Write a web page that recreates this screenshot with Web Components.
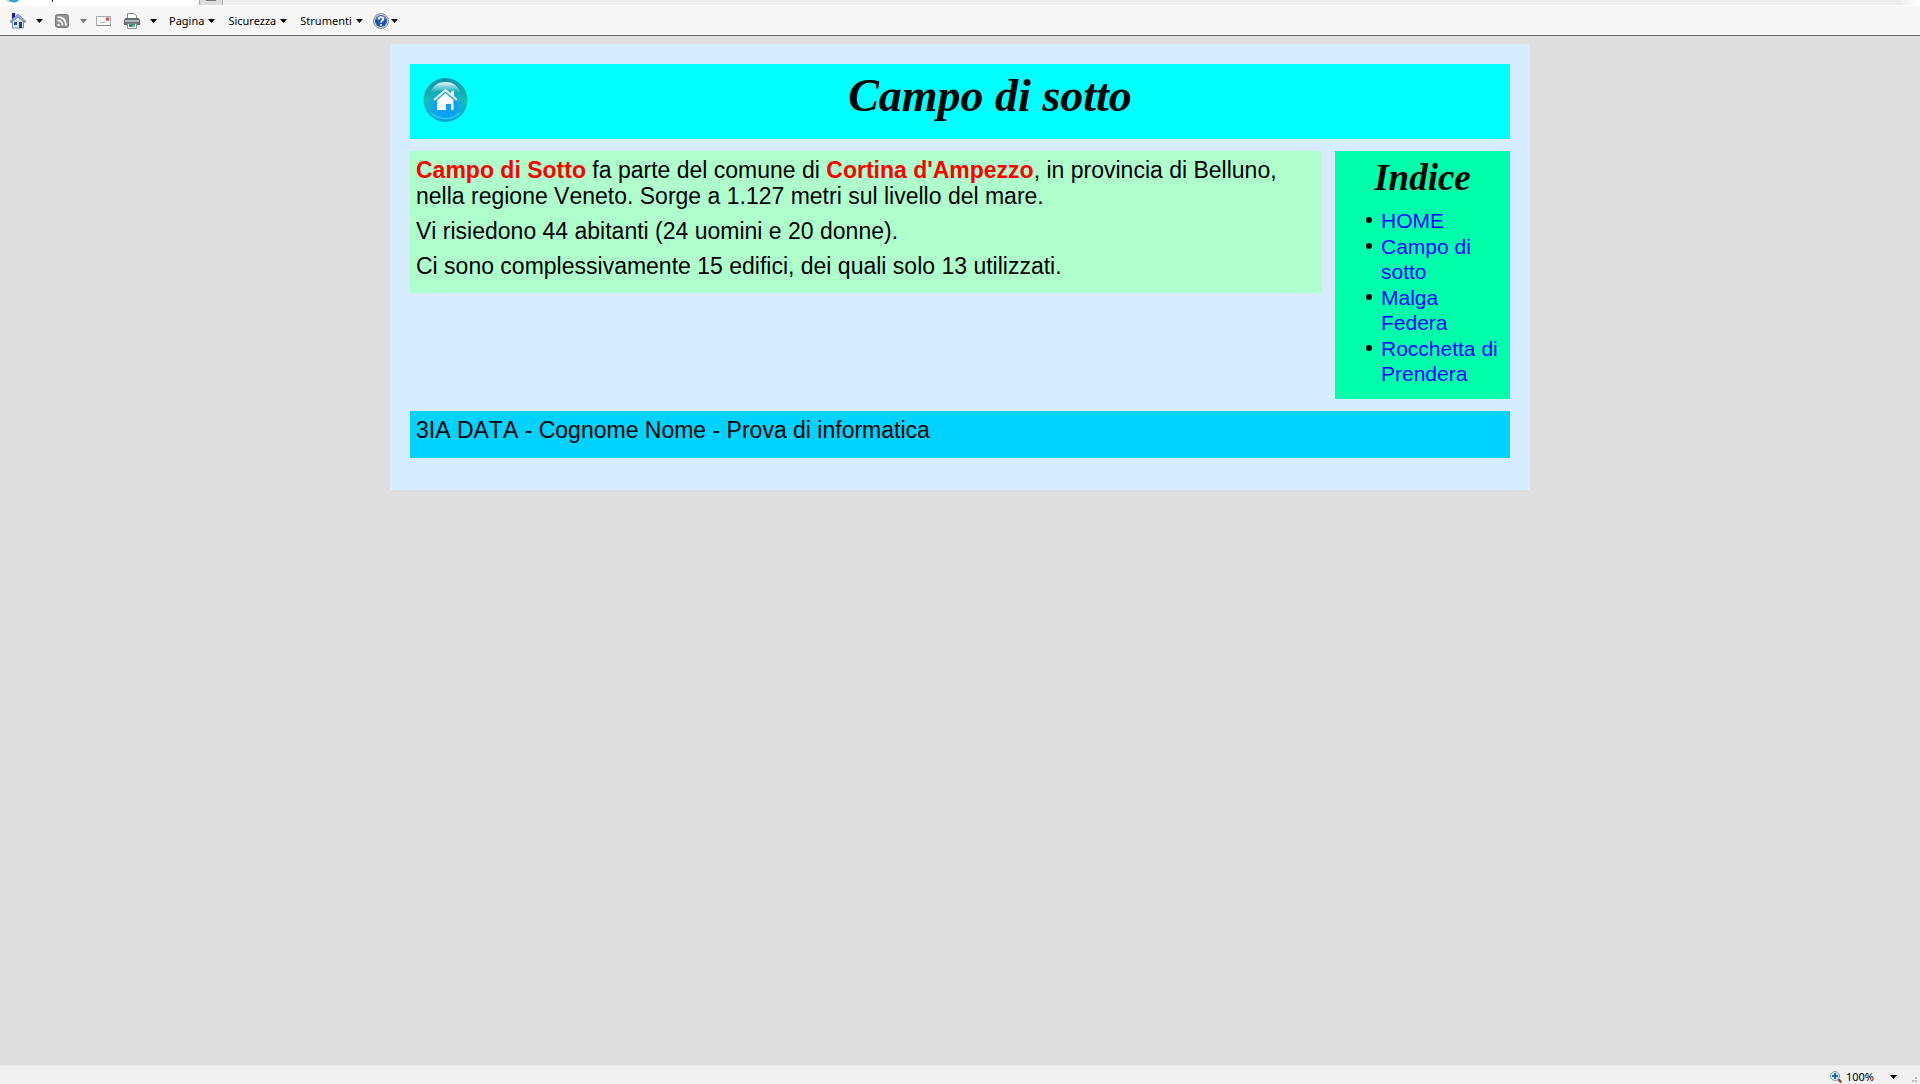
<!DOCTYPE html>
<html lang="it">
<head>
<meta charset="utf-8">
<title>Campo di sotto</title>
<style>
html, body { margin: 0; }
body { background: #dedede; font-family: "Liberation Sans", Arial, sans-serif; font-kerning: none; color: #000; }
</style>
</head>
<body>
<village-app></village-app>
<script>
const define = (name, html) => customElements.define(name, class extends HTMLElement {
  constructor() {
    super();
    this.attachShadow({ mode: 'open' }).innerHTML = html;
  }
});

define('drop-arrow', `
<style>
:host { display: block; width: 7px; height: 4px; }
svg { display: block; }
</style>
<svg width="7" height="4" viewBox="0 0 7 4"><path d="M0 0h7L3.5 4z" fill="currentColor"/></svg>`);

define('tab-strip', `
<style>
:host { display: flex; height: 5px; background: #eee; border-bottom: 1px solid #fff; }
.tab { width: 199px; background: #fff; }
.new { width: 22px; border: solid #aaa; border-width: 0 1px; background: #dcdcdc; display: flex; justify-content: center; }
.new i { width: 10px; height: 1px; background: #777; }
.end { margin-left: auto; width: 20px; background: linear-gradient(90deg, #eee, #fff); }
svg { display: block; }
</style>
<div class="tab"><svg width="60" height="4" viewBox="0 0 60 4"><path d="M8 0h11q-2 2.500-5 2.500T8 0z" fill="#2ba6dd"/><path d="M7 0q0 2 3 1.500" fill="none" stroke="#e0b93c"/><path d="M52 0h1v2h-1z" fill="#222"/></svg></div>
<div class="new"><i></i></div>
<div class="end"></div>`);

define('tool-bar', `
<style>
:host { display: flex; align-items: center; height: 29px; padding-left: 10px; background: #f7f7f7; border-bottom: 1px solid #6b6b6b;
  font: 11px/16px "Noto Sans", sans-serif; }
button { display: flex; align-items: center; gap: 4px; margin: 0 13px 0 0; padding: 0; border: 0; background: none; font: inherit; color: #000; }
.split { gap: 10px; margin-right: 12px; }
.split.off { color: #777; margin-right: 9px; }
.last { margin-right: 10px; }
.help { gap: 2px; }
svg { display: block; }
</style>
<button class="split" aria-label="Pagina iniziale"><svg width="16" height="16" viewBox="0 0 16 16"><path d="M2.500 8v7h11V8L8 2z" fill="#dde6ee" stroke="#7d8da0"/><path d="M2 0h3v4L2 6z" fill="#1717c8"/><path d="M0 8.500L8 1l8 7.500-1.500 1L8 4 1.500 9.500z" fill="#8fa9cb" stroke="#56749f" stroke-width=".7"/><path d="M4 9h3v3H4z" fill="#174eac"/><path d="M9 9h3v6H9z" fill="#253f73"/><path d="M3 14h5v2H3z" fill="#b2bfcc"/></svg><drop-arrow></drop-arrow></button>
<button class="split off" aria-label="Feed"><svg width="15" height="16" viewBox="1 0 15 16"><rect x="1.500" y="1.500" width="13" height="13" rx="2" fill="#929292" stroke="#777"/><circle cx="4.500" cy="12" r="1.300" fill="#fff"/><path d="M3.500 7.500q5 0 5 5M3.500 4q8.500 0 8.500 8.500" fill="none" stroke="#fff" stroke-width="1.700"/></svg><drop-arrow></drop-arrow></button>
<button aria-label="Leggi posta"><svg width="15" height="16" viewBox="0 0 15 16"><rect x=".5" y="3.500" width="14" height="9" fill="#fafafa" stroke="#aaa"/><path d="M1 12.500h14" stroke="#888"/><path d="M10 4.500h3v3h-3z" fill="#e34235"/><path d="M4 9.500h5" stroke="#bbb"/></svg></button>
<button class="split" aria-label="Stampa"><svg width="16" height="16" viewBox="0 0 16 16"><path d="M3.500 6V.5h7L12.500 3v3" fill="#fff" stroke="#888"/><path d="M1 5h14l1 2v5H0V7z" fill="#666e75"/><path d="M1 7h14v2H1z" fill="#adb6bc"/><path d="M3.500 10.500h9v5h-9z" fill="#fff" stroke="#888"/><path d="M5 11h6v3H5z" fill="#1b8d9d"/><path d="M8 12h3v2H8z" fill="#68c66a"/></svg><drop-arrow></drop-arrow></button>
<button>Pagina<drop-arrow></drop-arrow></button>
<button>Sicurezza<drop-arrow></drop-arrow></button>
<button class="last">Strumenti<drop-arrow></drop-arrow></button>
<button class="help" aria-label="Guida"><svg width="16" height="16" viewBox="0 0 16 16"><circle cx="8" cy="8" r="7.500" fill="#d5d9df" stroke="#858b95"/><circle cx="8" cy="8" r="6" fill="#2054b5"/><path d="M3 6a5.200 5.200 0 0 1 10 0q-5 2-10 0z" fill="#5482d4"/><path d="M5.700 6.300Q5.800 4 8 4t2.300 2q0 1.200-1.200 1.900T8 9.700" fill="none" stroke="#fff" stroke-width="1.600"/><circle cx="8" cy="12" r="1" fill="#fff"/></svg><drop-arrow></drop-arrow></button>`);

define('status-bar', `
<style>
:host { display: flex; align-items: center; justify-content: flex-end; height: 18px; background: #f0f0f0; border-top: 1px solid #e6e6e6;
  font: 11px/16px "Noto Sans", sans-serif; }
button { display: flex; align-items: center; gap: 4px; margin: 0; padding: 4px 0 0; border: 0; background: none; font: inherit; color: #000; }
drop-arrow { margin-left: 12px; }
.grip { margin-left: 15px; align-self: flex-end; }
svg { display: block; }
</style>
<button><svg width="12" height="12" viewBox="0 0 12 12"><path d="M8 8l3.500 3.500" stroke="#8b5636" stroke-width="2.500"/><circle cx="5" cy="5" r="4.500" fill="#d9ecfa" stroke="#8799aa"/><path d="M5 2v6M2 5h6" stroke="#1767c3" stroke-width="2"/></svg>100%<drop-arrow></drop-arrow></button>
<svg class="grip" width="8" height="9" viewBox="0 0 8 9"><path d="M0 5h2v2H0zM3 5h2v2H3zM3 2h2v2H3z" fill="#bbb"/></svg>`);

define('page-banner', `
<style>
:host { display: flex; height: 75px; background: #0ff; }
a { margin: 14px 0 0 13px; width: 47px; }
h1 { flex: 1; margin: 5px 0 0; text-align: center; font: italic bold 46px/54px "Liberation Serif", "Times New Roman", serif; }
svg { display: block; }
</style>
<a href="#home" aria-label="Home"><svg width="46" height="46" viewBox="0 0 46 46">
<defs><linearGradient id="rim" x1="0" y1="0" x2="0" y2="1"><stop offset="0" stop-color="#0b91aa"/><stop offset=".5" stop-color="#18bdb4"/><stop offset="1" stop-color="#0aa5dc"/></linearGradient>
<radialGradient id="ball" cx=".5" cy=".68" r=".5"><stop offset="0" stop-color="#0798fa"/><stop offset=".6" stop-color="#08a5ef"/><stop offset="1" stop-color="#11b5c8" stop-opacity="0"/></radialGradient>
<linearGradient id="shine" x1="0" y1="0" x2="0" y2="1"><stop offset="0" stop-color="#fff"/><stop offset="1" stop-color="#6be0f4" stop-opacity=".1"/></linearGradient></defs>
<circle cx="22.500" cy="22" r="22" fill="url(#rim)"/><circle cx="22.500" cy="22" r="20" fill="url(#ball)"/>
<path d="M7 15C10 7 16 4 22.500 4S35 7 38 15q-15-6-31 0z" fill="url(#shine)"/>
<path d="M8 35q14.500 11 29 0" fill="none" stroke="#2fc8fb" stroke-width="1.500"/>
<path d="M11 22L22.500 12 34 22" fill="none" stroke="#fff" stroke-width="2"/><path d="M28 13h3v6l-3-3z" fill="#fff"/>
<path d="M14 22.500l8.500-7.500 8 7V32H28v-6h-5v6h-9z" fill="#fff"/></svg></a>
<h1><slot></slot></h1>`);

define('page-article', `
<style>
:host { display: flex; flex-direction: column; gap: 9px; box-sizing: border-box; flex: 1; padding: 6px 6px 14px; background: #aeffcb; font-size: 23px; line-height: 26px; }
::slotted(p) { margin: 0; }
</style>
<slot></slot>`);

define('page-index', `
<style>
:host { display: block; box-sizing: border-box; width: 175px; padding: 6px 6px 13px; background: #00ffaa; }
h2 { margin: 0 0 9px; text-align: center; font: italic bold 37px/42px "Liberation Serif", "Times New Roman", serif; }
ul { display: flex; flex-direction: column; gap: 1px; margin: 0; padding: 0 0 0 25px; list-style: none; font-size: 21px; line-height: 25px; }
li { display: flex; gap: 9px; }
li::before { content: ""; flex: none; width: 6px; height: 6px; margin-top: 9px; border-radius: 50%; background: #000; }
a { color: #00f; text-decoration: none; }
</style>
<h2>Indice</h2>
<ul>
<li><a href="#home">HOME</a></li>
<li><a href="#campo">Campo di sotto</a></li>
<li><a href="#malga">Malga Federa</a></li>
<li><a href="#rocchetta">Rocchetta di Prendera</a></li>
</ul>`);

define('page-footer', `
<style>
:host { display: block; padding: 6px 6px 15px; background: #00d2ff; font-size: 23px; line-height: 26px; }
</style>
<slot></slot>`);

define('village-app', `
<style>
:host { display: flex; flex-direction: column; min-height: 100vh; }
main { flex: 1; }
.sheet { display: flex; flex-direction: column; gap: 12px; box-sizing: border-box; max-width: 1140px; margin: 8px auto 0; padding: 20px 20px 32px; background: #d6edff; }
.row { display: flex; align-items: flex-start; gap: 13px; }
strong { color: #f00; }
p { margin: 0; }
</style>
<tab-strip></tab-strip>
<tool-bar></tool-bar>
<main><div class="sheet">
<page-banner>Campo di sotto</page-banner>
<div class="row">
<page-article>
<p><strong>Campo di Sotto</strong> fa parte del comune di <strong>Cortina d'Ampezzo</strong>, in provincia di Belluno, nella regione Veneto. Sorge a 1.127 metri sul livello del mare.</p>
<p>Vi risiedono 44 abitanti (24 uomini e 20 donne).</p>
<p>Ci sono complessivamente 15 edifici, dei quali solo 13 utilizzati.</p>
</page-article>
<page-index></page-index>
</div>
<page-footer>3IA DATA - Cognome Nome - Prova di informatica</page-footer>
</div></main>
<status-bar></status-bar>`);
</script>
</body>
</html>
